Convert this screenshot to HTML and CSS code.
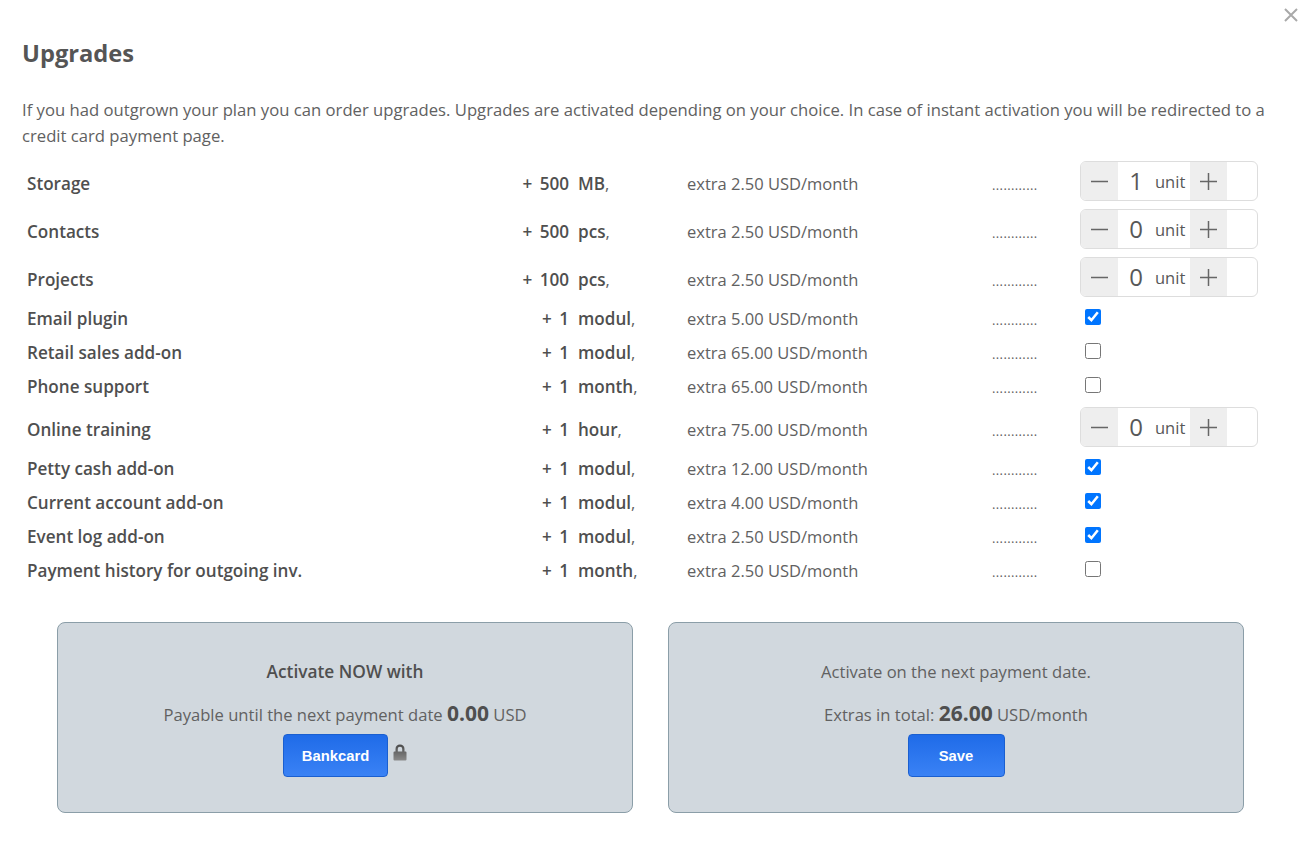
FILE: index.html
```html
<!DOCTYPE html>
<html lang="en">
<head>
<meta charset="utf-8">
<title>Upgrades</title>
<link rel="stylesheet" href="styles.css">
</head>
<body>
<svg class="sprite" width="0" height="0" aria-hidden="true">
  <symbol id="i-minus" viewBox="0 0 17 17"><path d="M0 8.5H17" fill="none" stroke="#666" stroke-width="1.5"/></symbol>
  <symbol id="i-plus" viewBox="0 0 17 17"><path d="M0 8.5H17M8.5 0V17" fill="none" stroke="#666" stroke-width="1.5"/></symbol>
</svg>
<main class="modal">
  <button class="close" type="button" aria-label="Close">
    <svg viewBox="0 0 14 14" width="14" height="14"><path d="M1 1L13 13M13 1L1 13" fill="none" stroke="#a9a9a9" stroke-width="2"/></svg>
  </button>
  <h1 class="title">Upgrades</h1>
  <p class="intro">If you had outgrown your plan you can order upgrades. Upgrades are activated depending on your choice. In case of instant activation you will be redirected to a credit card payment page.</p>

  <section class="rows">
    <div class="row row-step"><b class="name">Storage</b><b class="amount">+ 500</b><span class="unit"><b>MB</b>,</span><span class="extra">extra 2.50 USD/month</span><span class="dots">............</span>
      <div class="stepper"><span class="btn"><svg width="17" height="17"><use href="#i-minus"/></svg></span><span class="value"><span class="num">1</span><span class="word">unit</span></span><span class="btn"><svg width="17" height="17"><use href="#i-plus"/></svg></span><span class="tail"></span></div></div>
    <div class="row row-step"><b class="name">Contacts</b><b class="amount">+ 500</b><span class="unit"><b>pcs</b>,</span><span class="extra">extra 2.50 USD/month</span><span class="dots">............</span>
      <div class="stepper"><span class="btn"><svg width="17" height="17"><use href="#i-minus"/></svg></span><span class="value"><span class="num">0</span><span class="word">unit</span></span><span class="btn"><svg width="17" height="17"><use href="#i-plus"/></svg></span><span class="tail"></span></div></div>
    <div class="row row-step"><b class="name">Projects</b><b class="amount">+ 100</b><span class="unit"><b>pcs</b>,</span><span class="extra">extra 2.50 USD/month</span><span class="dots">............</span>
      <div class="stepper"><span class="btn"><svg width="17" height="17"><use href="#i-minus"/></svg></span><span class="value"><span class="num">0</span><span class="word">unit</span></span><span class="btn"><svg width="17" height="17"><use href="#i-plus"/></svg></span><span class="tail"></span></div></div>
    <div class="row row-check"><b class="name">Email plugin</b><b class="amount">+ 1</b><span class="unit"><b>modul</b>,</span><span class="extra">extra 5.00 USD/month</span><span class="dots">............</span><input class="check" type="checkbox" checked></div>
    <div class="row row-check"><b class="name">Retail sales add-on</b><b class="amount">+ 1</b><span class="unit"><b>modul</b>,</span><span class="extra">extra 65.00 USD/month</span><span class="dots">............</span><input class="check" type="checkbox"></div>
    <div class="row row-check"><b class="name">Phone support</b><b class="amount">+ 1</b><span class="unit"><b>month</b>,</span><span class="extra">extra 65.00 USD/month</span><span class="dots">............</span><input class="check" type="checkbox"></div>
    <div class="row row-step"><b class="name">Online training</b><b class="amount">+ 1</b><span class="unit"><b>hour</b>,</span><span class="extra">extra 75.00 USD/month</span><span class="dots">............</span>
      <div class="stepper"><span class="btn"><svg width="17" height="17"><use href="#i-minus"/></svg></span><span class="value"><span class="num">0</span><span class="word">unit</span></span><span class="btn"><svg width="17" height="17"><use href="#i-plus"/></svg></span><span class="tail"></span></div></div>
    <div class="row row-check"><b class="name">Petty cash add-on</b><b class="amount">+ 1</b><span class="unit"><b>modul</b>,</span><span class="extra">extra 12.00 USD/month</span><span class="dots">............</span><input class="check" type="checkbox" checked></div>
    <div class="row row-check"><b class="name">Current account add-on</b><b class="amount">+ 1</b><span class="unit"><b>modul</b>,</span><span class="extra">extra 4.00 USD/month</span><span class="dots">............</span><input class="check" type="checkbox" checked></div>
    <div class="row row-check"><b class="name">Event log add-on</b><b class="amount">+ 1</b><span class="unit"><b>modul</b>,</span><span class="extra">extra 2.50 USD/month</span><span class="dots">............</span><input class="check" type="checkbox" checked></div>
    <div class="row row-check"><b class="name">Payment history for outgoing inv.</b><b class="amount">+ 1</b><span class="unit"><b>month</b>,</span><span class="extra">extra 2.50 USD/month</span><span class="dots">............</span><input class="check" type="checkbox"></div>
  </section>

  <section class="panels">
    <div class="panel">
      <p class="panel-head"><b>Activate NOW with</b></p>
      <p class="panel-sum">Payable until the next payment date <b class="big">0.00</b> USD</p>
      <div class="actions">
        <button class="cta cta-card" type="button">Bankcard</button>
        <svg class="lock" viewBox="0 0 14 17" width="14" height="17"><defs><linearGradient id="lockfill" x1="0" y1="0" x2="0" y2="1"><stop offset="0" stop-color="#4a4a4a"/><stop offset="1" stop-color="#8a8a8a"/></linearGradient></defs><path fill="url(#lockfill)" fill-rule="evenodd" d="M2.5 7.5V5C2.5 2.2 4.4 0.5 7 0.5S11.5 2.2 11.5 5V7.5H12.5a1 1 0 0 1 1 1V15.5a1 1 0 0 1-1 1H1.5a1 1 0 0 1-1-1V8.5a1 1 0 0 1 1-1zM4.8 7.5H9.2V5C9.2 3.5 8.3 2.7 7 2.7S4.8 3.5 4.8 5z"/></svg>
      </div>
    </div>
    <div class="panel">
      <p class="panel-head">Activate on the next payment date.</p>
      <p class="panel-sum">Extras in total: <b class="big">26.00</b> USD/month</p>
      <div class="actions">
        <button class="cta cta-save" type="button">Save</button>
      </div>
    </div>
  </section>
</main>
</body>
</html>
```
FILE: styles.css
```css
* { box-sizing: border-box; }
html, body { margin: 0; padding: 0; background: #fff; }
body {
  font-family: "Open Sans", "Noto Sans", sans-serif;
  font-size: 16.5px;
  color: #616161;
  overflow: hidden;
}
b { font-weight: 600; color: #4f4f4f; }
.sprite { position: absolute; }
.modal { position: relative; width: 1303px; height: 864px; padding: 37px 22px 0; }
.close {
  position: absolute; top: 8px; right: 5px; width: 14px; height: 14px;
  padding: 0; border: 0; background: none; line-height: 0;
}
.title { margin: 0; font-size: 23.7px; line-height: 32px; font-weight: 700; color: #555; }
.intro { margin: 28px 0 0; width: 1250px; font-size: 16.66px; line-height: 26px; }
.rows { margin-top: 9px; }
.row {
  display: grid;
  grid-template-columns: 440px 102px 118px 305px 88px 178px;
  align-items: baseline;
  padding-left: 5px;
  line-height: 22px;
}
.row b { font-size: 17.1px; }
.row-step { height: 48px; padding-top: 15px; }
.row-check { height: 34px; padding-top: 6px; }
.amount { text-align: right; white-space: nowrap; word-spacing: 3px; }
.unit { padding-left: 9px; white-space: nowrap; }
.dots { font-size: 13px; letter-spacing: 0.38px; }
.stepper {
  display: flex;
  align-self: start;
  width: 178px; height: 40px;
  margin-top: -12px;
  border: 1px solid #ddd;
  border-radius: 6px;
  overflow: hidden;
}
.btn {
  display: flex; align-items: center; justify-content: center;
  width: 37px; background: #eee;
}
.value { width: 72px; display: flex; align-items: center; color: #585858; padding-left: 10px; }
.num { width: 16px; font-size: 24px; font-weight: 400; line-height: 30px; text-align: center; }
.word { margin: 2px 0 0 11px; font-size: 16.5px; }
.tail { flex: 1; }
.check {
  align-self: start;
  width: 16px; height: 16px; margin: 1px 0 0 5px;
  accent-color: #0075ff;
}
.panels { display: flex; gap: 35px; margin: 34px 0 0 35px; }
.panel {
  width: 576px; height: 191px;
  padding-top: 36px;
  background: #d1d8de;
  border: 1px solid #8b9ea8;
  border-radius: 8px;
  text-align: center;
  font-size: 16.6px;
}
.panel p { margin: 0; line-height: 26px; }
.panel-head b { font-size: 17.3px; }
.panel-sum { margin-top: 15px !important; }
.big { font-size: 21px; font-weight: 700; }
.actions { display: flex; justify-content: center; margin-top: 6px; }
.cta {
  height: 43px; padding: 0;
  border: 1px solid #1a5fd0;
  border-radius: 4px;
  background: linear-gradient(#1f6be8, #3a82f5);
  color: #fff;
  font-family: "Liberation Sans", Arial, sans-serif;
  font-size: 14.8px; font-weight: 700;
}
.cta-card { width: 105px; }
.cta-save { width: 97px; }
.lock { margin: 10px 0 0 5px; }
```
